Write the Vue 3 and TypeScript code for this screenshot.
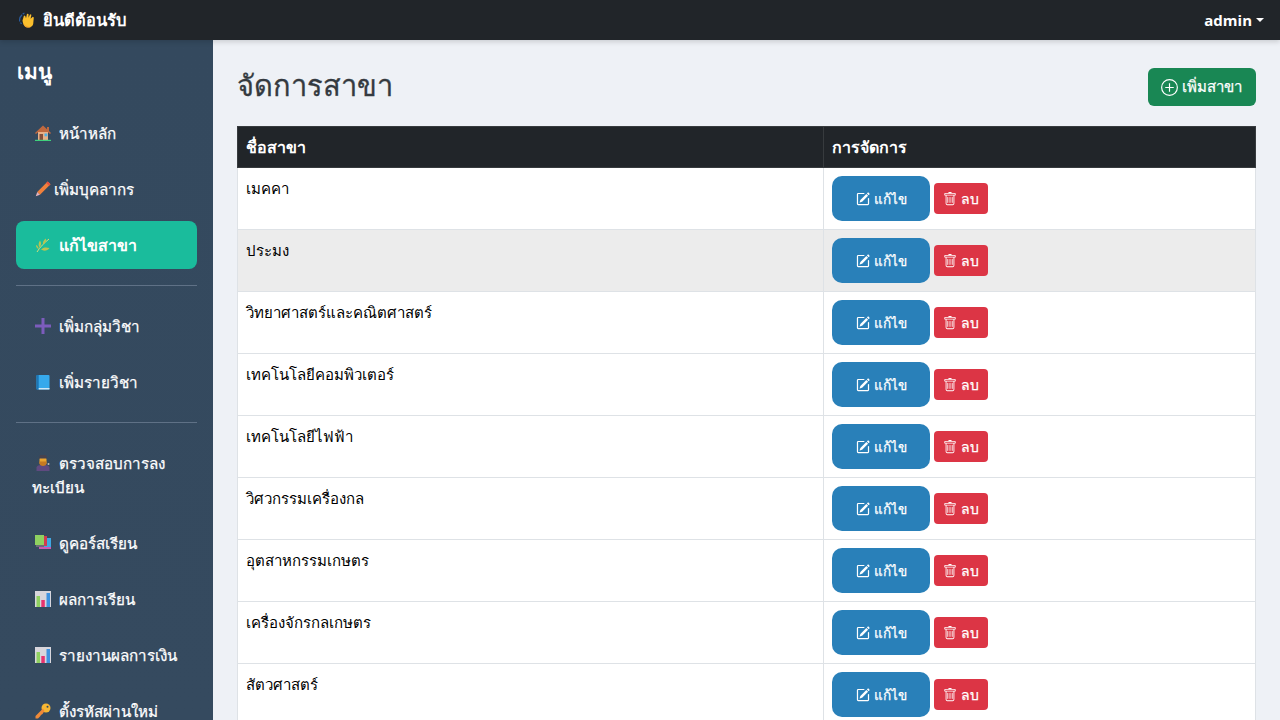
<template>
  <div class="page">
    <svg class="defs" width="0" height="0">
      <defs>
        <symbol id="wave" viewBox="0 0 16 16">
          <path d="M.6 9.500C.4 7 1.200 4.500 3 2.800M2.500 12 1.500 10.500M5.500 1C4.800 1.300 4.200 1.700 3.700 2.200" stroke="#2a5c9e" stroke-width="1.300" fill="none" />
          <path d="M3.500 8.500 5 3.600 6.300 4 7 6.200 8 1.800l1.500.3.100 3.600L11 2.200l1.400.6-.8 4L13.800 4.800l1 .8-.6 6.400c-.5 2.200-2.500 3.600-5 3.600-3 0-5-2.200-5.700-7.100z" fill="#fbbf2d" />
          <path d="M4 11c1 2.700 2.800 4.600 5.200 4.600 1 0 2-.2 2.800-.7C8.500 15 5.800 13.700 4 11z" fill="#f09a2c" />
        </symbol>
        <symbol id="home" viewBox="0 0 16 16">
          <path d="M8 .5 0 8l1 1 2-1.700V15h10V7.300L15 9l1-1-2-1.900V2h-2v2.200z" fill="#c0693f" />
          <rect x="3" y="7" width="10" height="8" fill="#e8b088" />
          <rect x="4.500" y="9" width="3.500" height="6" fill="#85503b" />
          <rect x="9.500" y="8.500" width="2.800" height="2.800" fill="#49b4ea" />
          <rect y="14.800" width="16" height="1.200" fill="#3fd07c" />
        </symbol>
        <symbol id="pencil" viewBox="0 0 16 16">
          <path d="M12.700.5 15.500 3.300 5 13.800 2.200 11z" fill="#f0803c" />
          <path d="M12.700.5 15.500 3.300 14 4.800 11.200 2z" fill="#e8503f" />
          <path d="M2.200 11 5 13.800 .8 15.200z" fill="#e7b3bd" />
        </symbol>
        <symbol id="herb" viewBox="0 0 16 16">
          <path d="M2 15C5 10 9 6 14 2" stroke="#d6dc78" stroke-width="1" fill="none" />
          <path d="M4.500 10.500C3 8.500 3.500 5.500 5 3.500c1.500 2 1.500 5-.5 7zM8 7.500C7.500 5 8.500 3 11 1.500c.5 2.500-.5 5-3 6zM6 12.500c2-2.200 5-2.500 8.500-1.500-2 2.800-5.500 3.500-8.500 1.500zM1 8c1.500.5 2.500 2 2.700 4C2 11.500 1 10 1 8z" fill="#b8c452" />
        </symbol>
        <symbol id="plus" viewBox="0 0 16 16">
          <path d="M6.500 0h3v6.500H16v3H9.500V16h-3V9.500H0v-3h6.500z" fill="#7c5cbc" />
        </symbol>
        <symbol id="book" viewBox="0 0 16 16">
          <rect x="1.500" y="1" width="13" height="14.500" rx="1" fill="#36a9ec" />
          <rect x="1.500" y="1" width="2.200" height="14.500" fill="#1c76b6" />
          <rect x="3.700" y="14" width="10.800" height="1.500" fill="#cfe8f7" />
        </symbol>
        <symbol id="judge" viewBox="0 0 16 16">
          <path d="M1.500 16v-3.500C1.500 11 4 9.800 8 9.800s6.500 1.200 6.500 2.700V16z" fill="#5f4a80" />
          <rect x="4.500" y="2.500" width="7" height="7" rx="1.500" fill="#eba52f" />
          <path d="M4.500 6.500h7v2c0 1-1.500 2.500-3.500 2.500S4.500 9.500 4.500 8.500z" fill="#c67a22" />
          <path d="M4 3.500 5 0h6l1 3.500z" fill="#46424e" />
          <circle cx="13.500" cy="9" r="1" fill="#bdbdbd" />
        </symbol>
        <symbol id="books" viewBox="0 0 16 16">
          <rect x="4" y="9" width="12" height="5" fill="#c957b4" />
          <rect x="8.500" y="3" width="7.500" height="9" fill="#3fa8e4" />
          <rect x="8" y="1" width="4" height="10" fill="#d13b4f" />
          <rect x="0" y="0" width="9" height="10" fill="#8fd160" />
          <rect x="1" y="10" width="8" height="2" fill="#6d6d78" />
        </symbol>
        <symbol id="chart" viewBox="0 0 16 16">
          <rect width="16" height="16" fill="#d8d6dc" />
          <rect x="1.500" y="5" width="3.500" height="11" fill="#8fd160" />
          <rect x="6.300" y="9" width="3.500" height="7" fill="#e8336f" />
          <rect x="11.500" y="2" width="3.500" height="14" fill="#3f92e0" />
        </symbol>
        <symbol id="key" viewBox="0 0 16 16">
          <circle cx="11" cy="5" r="4.500" fill="#f7b733" />
          <path d="M8 5.500 .5 13 .5 15.500 3 15.500 5 13.500 6 12l1.500-1 2-3z" fill="#f08a38" />
          <circle cx="12.500" cy="3.700" r="1" fill="#34495e" />
        </symbol>
      </defs>
    </svg>

    <header class="topbar">
      <span class="brand"><svg class="emoji" viewBox="0 0 16 16"><use href="#wave" /></svg>ยินดีต้อนรับ</span>
      <span class="user">admin<i class="caret"></i></span>
    </header>

    <div class="body-row">
      <aside class="sidebar">
        <h2 class="menu-title">เมนู</h2>
        <template v-for="(group, i) in menu" :key="i">
          <hr v-if="i > 0" class="divider" />
          <a
            v-for="item in group"
            :key="item.label"
            class="nav-link"
            :class="{ active: item.active }"
          ><svg class="emoji" :class="{ tight: item.icon === 'pencil' }" viewBox="0 0 16 16"><use :href="'#' + item.icon" /></svg>{{ item.label }}</a>
        </template>
      </aside>

      <main class="content">
        <div class="head">
          <h1>จัดการสาขา</h1>
          <button class="btn-add">
            <svg viewBox="0 0 16 16" width="17" height="17" fill="none" stroke="currentColor">
              <circle cx="8" cy="8" r="7.400" stroke-width="1.100" />
              <path d="M8 4v8M4 8h8" stroke-width="1.100" />
            </svg>
            เพิ่มสาขา
          </button>
        </div>

        <table class="grid">
          <colgroup>
            <col class="col-name" />
            <col />
          </colgroup>
          <thead>
            <tr>
              <th>ชื่อสาขา</th>
              <th>การจัดการ</th>
            </tr>
          </thead>
          <tbody>
            <tr v-for="(name, i) in branches" :key="name" :class="{ hover: i === 1 }">
              <td>{{ name }}</td>
              <td>
                <div class="actions">
                  <button class="btn-edit">
                    <svg viewBox="0 0 16 16" width="14" height="14" fill="currentColor">
                      <path d="M15.500 1.900a.5.500 0 0 1 0 .7l-1 1-2-2 1-1a.5.500 0 0 1 .7 0l1.300 1.300zM13.800 4.300l-2-2-6.800 6.800a.5.500 0 0 0-.1.200l-.8 2.400a.25.250 0 0 0 .3.300l2.400-.8a.5.500 0 0 0 .2-.1z" />
                      <path d="M1 13.500A1.500 1.500 0 0 0 2.500 15h11a1.500 1.500 0 0 0 1.500-1.500v-6a.7.700 0 0 0-1.400 0v6a.2.200 0 0 1-.1.100h-11a.2.200 0 0 1-.1-.1v-11a.2.200 0 0 1 .1-.1H9a.7.700 0 0 0 0-1.400H2.500A1.500 1.500 0 0 0 1 2.500z" />
                    </svg>
                    <span class="edit-label">แก้ไข</span>
                  </button>
                  <button class="btn-del">
                    <svg viewBox="0 0 16 16" width="14" height="14" fill="currentColor">
                      <path d="M5.500 5.500A.5.500 0 0 1 6 6v6a.5.500 0 0 1-1 0V6a.5.500 0 0 1 .5-.5zm2.500 0a.5.500 0 0 1 .5.500v6a.5.500 0 0 1-1 0V6a.5.500 0 0 1 .5-.5zm3 .5a.5.500 0 0 0-1 0v6a.5.500 0 0 0 1 0z" />
                      <path d="M14.500 3a1 1 0 0 1-1 1H13v9a2 2 0 0 1-2 2H5a2 2 0 0 1-2-2V4h-.5a1 1 0 0 1-1-1V2a1 1 0 0 1 1-1H6a1 1 0 0 1 1-1h2a1 1 0 0 1 1 1h3.500a1 1 0 0 1 1 1zM4.100 4 4 4.100V13a1 1 0 0 0 1 1h6a1 1 0 0 0 1-1V4.100L11.900 4zM2.500 3h11V2h-11z" />
                    </svg>
                    ลบ
                  </button>
                </div>
              </td>
            </tr>
          </tbody>
        </table>
      </main>
    </div>
  </div>
</template>

<script setup lang="ts">
interface MenuItem {
  icon: string;
  label: string;
  active?: boolean;
}

const menu: MenuItem[][] = [
  [
    { icon: "home", label: "หน้าหลัก" },
    { icon: "pencil", label: "เพิ่มบุคลากร" },
    { icon: "herb", label: "แก้ไขสาขา", active: true },
  ],
  [
    { icon: "plus", label: "เพิ่มกลุ่มวิชา" },
    { icon: "book", label: "เพิ่มรายวิชา" },
  ],
  [
    { icon: "judge", label: "ตรวจสอบการลงทะเบียน" },
    { icon: "books", label: "ดูคอร์สเรียน" },
    { icon: "chart", label: "ผลการเรียน" },
    { icon: "chart", label: "รายงานผลการเงิน" },
    { icon: "key", label: "ตั้งรหัสผ่านใหม่" },
  ],
];

const branches = [
  "เมคคา",
  "ประมง",
  "วิทยาศาสตร์และคณิตศาสตร์",
  "เทคโนโลยีคอมพิวเตอร์",
  "เทคโนโลยีไฟฟ้า",
  "วิศวกรรมเครื่องกล",
  "อุตสาหกรรมเกษตร",
  "เครื่องจักรกลเกษตร",
  "สัตวศาสตร์",
];
</script>

<style>
html,
body {
  margin: 0;
  overflow: hidden;
}
</style>

<style scoped>
.page {
  height: 720px;
  overflow: hidden;
  display: flex;
  flex-direction: column;
  background: #eef1f6;
  font-family: "Liberation Sans", sans-serif;
  font-size: 15px;
  line-height: 24px;
  color: #000;
}
.defs {
  position: absolute;
}
.topbar {
  flex: none;
  height: 40px;
  padding: 0 16px 0 19px;
  display: flex;
  align-items: center;
  justify-content: space-between;
  background: #212529;
  color: #fff;
  font-size: 16.5px;
  font-weight: 700;
  box-shadow: 0 2px 5px rgba(0, 0, 0, 0.15);
  position: relative;
  z-index: 2;
}
.brand {
  display: flex;
  align-items: center;
}
.brand .emoji {
  margin: 0 8px 0 0;
}
.user {
  display: flex;
  align-items: center;
  font-family: "Open Sans", sans-serif;
  font-size: 15px;
}
.caret {
  margin-left: 4px;
  border-top: 4.5px solid #fff;
  border-left: 4.5px solid transparent;
  border-right: 4.5px solid transparent;
}
.emoji {
  width: 16px;
  height: 16px;
  vertical-align: -2px;
  margin: 0 8px 0 3px;
}
.emoji.tight {
  margin-right: 3px;
}
.body-row {
  flex: 1;
  display: flex;
  min-height: 0;
}
.sidebar {
  flex: none;
  width: 181px;
  padding: 16px;
  background: linear-gradient(180deg, #34495e, #354a5f);
  color: #fff;
}
.menu-title {
  margin: 0 0 21px;
  padding-left: 1px;
  font-size: 20.8px;
  line-height: 32px;
  font-weight: 700;
}
.nav-link {
  display: block;
  margin-bottom: 8px;
  padding: 13px 16px 11px;
  border-radius: 8px;
  font-size: 15.2px;
  font-weight: 400;
  -webkit-text-stroke: 0.25px #fff;
}
.nav-link.active {
  background: #1abc9c;
  font-size: 16px;
  font-weight: 700;
  -webkit-text-stroke: 0;
}
.divider {
  height: 1px;
  margin: 16px 0;
  border: 0;
  background: #5f7186;
}
.content {
  flex: 1;
  min-width: 0;
  padding: 24px;
}
.head {
  display: flex;
  align-items: center;
  justify-content: space-between;
  height: 46px;
  margin-bottom: 16px;
}
h1 {
  margin: 0 0 2px;
  font-size: 29px;
  line-height: 44px;
  font-weight: 500;
  color: #343a40;
  -webkit-text-stroke: 0.3px #343a40;
}
.btn-add {
  display: flex;
  align-items: center;
  gap: 4px;
  height: 38px;
  width: 108px;
  justify-content: center;
  padding: 0 2px 0 0;
  border: 0;
  border-radius: 6px;
  background: #198754;
  color: #fff;
  font: inherit;
  font-size: 15px;
  -webkit-text-stroke: 0.25px #fff;
}
.grid {
  width: 100%;
  table-layout: fixed;
  border-collapse: collapse;
  background: #fff;
}
.col-name {
  width: 586px;
}
th,
td {
  padding: 9px 8px 7px;
  border: 1px solid #dee2e6;
  text-align: left;
  vertical-align: top;
}
th {
  background: #212529;
  border-color: #373b3e;
  color: #fff;
  font-size: 16px;
  font-weight: 700;
}
td:last-child {
  padding: 8px;
}
tr.hover td {
  background: #ececec;
}
.actions {
  display: flex;
  align-items: center;
  gap: 4px;
}
.actions button {
  display: flex;
  align-items: center;
  justify-content: center;
  gap: 4px;
  border: 0;
  padding: 0;
  color: #fff;
  font: inherit;
  font-size: 14px;
  font-weight: 400;
  -webkit-text-stroke: 0.25px #fff;
}
.edit-label {
  padding-top: 2px;
  font-size: 13.5px;
}
.btn-edit {
  width: 98px;
  height: 45px;
  border-radius: 10px;
  background: #2980b9;
}
.btn-del {
  width: 54px;
  height: 31px;
  border-radius: 4px;
  background: #dc3545;
}
</style>
